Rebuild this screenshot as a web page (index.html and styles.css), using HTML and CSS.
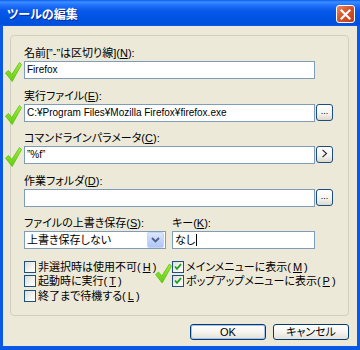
FILE: index.html
```html
<!DOCTYPE html>
<html lang="ja">
<head>
    <meta charset="UTF-8">
    <title>ツールの編集</title>
    <link rel="stylesheet" href="styles.css">
</head>
<body>
<svg width="0" height="0" class="defs">
    <defs>
        <linearGradient id="tickFill" x1="0" y1="0" x2="0" y2="1">
            <stop offset="0" stop-color="#a6ec3c"/>
            <stop offset="1" stop-color="#62cc12"/>
        </linearGradient>
    </defs>
</svg>
<div class="window">
    <div class="titlebar">
        <span class="title">ツールの編集</span>
        <span class="close">
            <svg width="11" height="11" viewBox="0 0 11 11"><path d="M1.5 1.5 L9.5 9.5 M9.5 1.5 L1.5 9.5" stroke="#fff" stroke-width="2.2" stroke-linecap="square"/></svg>
        </span>
    </div>
    <div class="client">
        <div class="group">
            <div class="field">
                <div class="label">名前[”-”は区切り線](<u>N</u>):</div>
                <div class="row">
                    <svg class="tick" width="17" height="20" viewBox="0 0 17 20"><path d="M0.5 11 L3.5 8.5 L6.8 12.5 L14.5 0.5 L16.5 2.5 L7.2 19.5 Z" fill="url(#tickFill)" stroke="#58c00a" stroke-width="0.8"/></svg>
                    <div class="input">Firefox</div>
                </div>
            </div>
            <div class="field">
                <div class="label">実行ファイル(<u>E</u>):</div>
                <div class="row">
                    <svg class="tick" width="17" height="20" viewBox="0 0 17 20"><path d="M0.5 11 L3.5 8.5 L6.8 12.5 L14.5 0.5 L16.5 2.5 L7.2 19.5 Z" fill="url(#tickFill)" stroke="#58c00a" stroke-width="0.8"/></svg>
                    <div class="input">C:¥Program Files¥Mozilla Firefox¥firefox.exe</div>
                    <span class="mini-btn">...</span>
                </div>
            </div>
            <div class="field">
                <div class="label">コマンドラインパラメータ(<u>C</u>):</div>
                <div class="row">
                    <svg class="tick" width="17" height="20" viewBox="0 0 17 20"><path d="M0.5 11 L3.5 8.5 L6.8 12.5 L14.5 0.5 L16.5 2.5 L7.2 19.5 Z" fill="url(#tickFill)" stroke="#58c00a" stroke-width="0.8"/></svg>
                    <div class="input">”%f”</div>
                    <span class="mini-btn">
                        <svg width="7" height="9" viewBox="0 0 7 9"><path d="M1.5 0.8 L5.5 4.5 L1.5 8.2" fill="none" stroke="#222" stroke-width="1.1"/></svg>
                    </span>
                </div>
            </div>
            <div class="field">
                <div class="label">作業フォルダ(<u>D</u>):</div>
                <div class="row">
                    <div class="input"></div>
                    <span class="mini-btn">...</span>
                </div>
            </div>
            <div class="pair">
                <div class="field">
                    <div class="label">ファイルの上書き保存(<u>S</u>):</div>
                    <div class="combo">
                        <span>上書き保存しない</span>
                        <span class="combo-btn">
                            <svg width="9" height="6" viewBox="0 0 9 6"><path d="M1 1 L4.5 4.5 L8 1" fill="none" stroke="#4d6185" stroke-width="1.8"/></svg>
                        </span>
                    </div>
                </div>
                <div class="field">
                    <div class="label">キー(<u>K</u>):</div>
                    <div class="input key">なし<span class="caret"></span></div>
                </div>
            </div>
            <div class="checks">
                <label class="check"><span class="box"></span>非選択時は使用不可(<u>H</u>)</label>
                <label class="check"><span class="box on"><svg width="8" height="8" viewBox="0 0 8 8"><path d="M1 3.5 L3 5.8 L7 1.2" fill="none" stroke="#21a121" stroke-width="1.8"/></svg></span>メインメニューに表示(<u>M</u>)</label>
                <label class="check"><span class="box"></span>起動時に実行(<u>T</u>)</label>
                <label class="check"><span class="box on"><svg width="8" height="8" viewBox="0 0 8 8"><path d="M1 3.5 L3 5.8 L7 1.2" fill="none" stroke="#21a121" stroke-width="1.8"/></svg></span>ポップアップメニューに表示(<u>P</u>)</label>
                <label class="check"><span class="box"></span>終了まで待機する(<u>L</u>)</label>
                <svg class="tick big" width="17" height="21" viewBox="0 0 17 20"><path d="M0.5 11 L3.5 8.5 L6.8 12.5 L14.5 0.5 L16.5 2.5 L7.2 19.5 Z" fill="url(#tickFill)" stroke="#58c00a" stroke-width="0.8"/></svg>
            </div>
        </div>
        <div class="actions">
            <button class="default">OK</button>
            <button>キャンセル</button>
        </div>
    </div>
</div>
</body>
</html>
```

FILE: styles.css
```css
body {
    margin: 0;
    background: #ffffff;
    font-family: "Liberation Sans", "Noto Sans CJK JP", sans-serif;
    font-size: 11px;
    color: #000000;
    font-feature-settings: "palt";
}
.defs {
    position: absolute;
}
.window {
    width: 360px;
    height: 350px;
    background: #0a58e6;
    display: flex;
    flex-direction: column;
}
.titlebar {
    height: 26px;
    flex-shrink: 0;
    display: flex;
    align-items: center;
    justify-content: space-between;
    padding: 0 5px 0 7px;
    background: linear-gradient(to bottom, #0a5cf0 0, #3d8dff 2px, #2372fa 5px, #0758ea 11px, #0054e3 18px, #0050dc 24px, #0a58e6 26px);
}
.title {
    color: #ffffff;
    font-weight: bold;
    font-size: 12px;
    text-shadow: 1px 1px #0c2a9c;
}
.close {
    width: 19px;
    height: 18px;
    margin-top: 2px;
    box-sizing: border-box;
    border: 1px solid #ffffff;
    border-radius: 3px;
    background: linear-gradient(135deg, #e98a68 0%, #d8542a 45%, #c23d13 100%);
    display: flex;
    align-items: center;
    justify-content: center;
}
.client {
    flex: 1;
    background: #ece9d8;
    margin: 0 3px 4px;
    padding: 9px 8px 0 7px;
    display: flex;
    flex-direction: column;
}
.group {
    height: 281px;
    box-sizing: border-box;
    border: 1px solid #d0d0bf;
    border-radius: 4px;
    padding: 11px 0 0 13px;
    display: flex;
    flex-direction: column;
    gap: 10.5px;
}
.field {
    display: flex;
    flex-direction: column;
    gap: 2px;
}
.label {
    height: 12px;
    line-height: 12px;
    white-space: nowrap;
}
.row {
    position: relative;
    display: flex;
    gap: 1px;
    height: 18px;
}
.input {
    width: 291px;
    height: 18px;
    box-sizing: border-box;
    border: 1px solid #7f9db9;
    background: #ffffff;
    padding: 0 2px;
    line-height: 16px;
    font-size: 10px;
    white-space: nowrap;
    overflow: hidden;
}
.mini-btn {
    width: 17px;
    height: 17px;
    box-sizing: border-box;
    border: 1px solid #1d4c80;
    border-radius: 3px;
    background: linear-gradient(to bottom, #ffffff 0%, #f3f2ee 60%, #dcd8cc 100%);
    display: flex;
    align-items: center;
    justify-content: center;
    font-size: 9px;
    line-height: 12px;
    padding-bottom: 2px;
}
.tick {
    position: absolute;
    left: -19px;
    top: 1px;
}
.pair {
    display: flex;
    gap: 6px;
}
.combo {
    width: 142px;
    height: 18px;
    box-sizing: border-box;
    border: 1px solid #7f9db9;
    background: #ffffff;
    padding: 0 1px 0 2px;
    display: flex;
    align-items: center;
    justify-content: space-between;
    line-height: 16px;
}
.combo-btn {
    width: 15px;
    height: 14px;
    border-radius: 2px;
    background: linear-gradient(to bottom, #dce7fd 0%, #c3d4fb 50%, #b0c6f6 100%);
    border: 1px solid #c7d5f5;
    display: flex;
    align-items: center;
    justify-content: center;
}
.key {
    width: 143px;
    display: flex;
    align-items: center;
    font-size: 11px;
}
.caret {
    width: 1px;
    height: 12px;
    background: #000000;
    margin-left: 1px;
}
.checks {
    position: relative;
    display: grid;
    grid-template-columns: 148px 1fr;
    grid-auto-rows: 14.5px;
}
.check {
    display: flex;
    align-items: center;
    gap: 2px;
    white-space: nowrap;
    line-height: 12px;
}
.box {
    width: 12px;
    height: 12px;
    box-sizing: border-box;
    border: 1px solid #1c5180;
    background: linear-gradient(135deg, #dcdcd7 0%, #f4f4f1 60%, #ffffff 100%);
    display: flex;
    align-items: center;
    justify-content: center;
}
.tick.big {
    left: 131px;
    top: 3px;
}
.actions {
    display: flex;
    justify-content: flex-end;
    gap: 7px;
    margin-top: 8px;
}
button {
    width: 76px;
    height: 16px;
    box-sizing: border-box;
    padding: 0;
    border: 1px solid #003c74;
    border-radius: 3px;
    background: linear-gradient(to bottom, #ffffff 0%, #f4f3ee 55%, #e3e0d6 100%);
    font-family: "Liberation Sans", "Noto Sans CJK JP", sans-serif;
    font-size: 11px;
    line-height: 13px;
    color: #000000;
    font-feature-settings: "palt";
}
.default {
    box-shadow: inset 0 0 0 1px #a8c0ee;
}
```
